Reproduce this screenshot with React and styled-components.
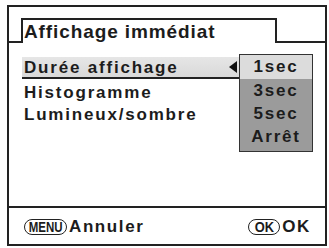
import React from "react"
import styled, { createGlobalStyle } from "styled-components"

const GlobalStyle = createGlobalStyle`
  html, body {
    margin: 0;
    padding: 0;
    background: #fff;
  }
  body {
    font-family: "Liberation Sans", Arial, sans-serif;
    color: #1c1c1c;
  }
`

const items = ["Durée affichage", "Histogramme", "Lumineux/sombre"]
const options = ["1sec", "3sec", "5sec", "Arrêt"]

const App = () => {
  return (
    <Screen>
      <GlobalStyle />
      <Frame>
        <Header>
          <Edge $w="12px" />
          <Tab>Affichage immédiat</Tab>
          <Edge />
        </Header>

        <Body>
          {items.map((label, i) => (
            <Row key={label} $active={i === 0}>
              {label}
              {i === 0 && <Arrow />}
            </Row>
          ))}

          <Dropdown>
            {options.map((opt, i) => (
              <Option key={opt} $selected={i === 0}>
                {opt}
              </Option>
            ))}
          </Dropdown>
        </Body>

        <Footer>
          <Action>
            <Pill $w="43px">
              <PillText $sx={0.82}>MENU</PillText>
            </Pill>
            Annuler
          </Action>
          <Action>
            <Pill $w="32px">
              <PillText $sx={0.92}>OK</PillText>
            </Pill>
            OK
          </Action>
        </Footer>
      </Frame>
    </Screen>
  )
}

const Screen = styled.div`
  width: 329px;
  height: 248px;
  box-sizing: border-box;
  padding: 5px 2px 2px 7px;
  background: #fff;
  overflow: hidden;
`

const Frame = styled.div`
  width: 320px;
  height: 241px;
  box-sizing: border-box;
  border: 2px solid #222;
  display: flex;
  flex-direction: column;
`

const Header = styled.div`
  display: flex;
  align-items: flex-end;
  height: 36px;
  padding-top: 11px;
  box-sizing: border-box;
`

const Edge = styled.div`
  width: ${(p) => p.$w || "auto"};
  flex: ${(p) => (p.$w ? "none" : "1")};
  height: 100%;
  border-bottom: 2px solid #222;
  box-sizing: border-box;
`

const Tab = styled.div`
  width: 256px;
  height: 100%;
  box-sizing: border-box;
  border: 2px solid #222;
  border-bottom: none;
  padding: 1px 0 0 1px;
  font-size: 19px;
  font-weight: bold;
  letter-spacing: 0.9px;
  line-height: 22px;
  white-space: nowrap;
`

const Body = styled.div`
  position: relative;
  flex: 1;
  padding: 14px 0 0 13px;
  display: flex;
  flex-direction: column;
`

const Row = styled.div`
  position: relative;
  width: ${(p) => (p.$active ? "217px" : "auto")};
  height: 22px;
  box-sizing: border-box;
  padding-left: 2px;
  margin-bottom: ${(p) => (p.$active ? "3px" : "0")};
  background: ${(p) =>
    p.$active ? "linear-gradient(#e6e6e6, #d9d9d9)" : "transparent"};
  border-bottom: ${(p) => (p.$active ? "2px solid #222" : "none")};
  font-size: 17px;
  font-weight: bold;
  letter-spacing: 1.8px;
  line-height: 21px;
  white-space: nowrap;
`

const Arrow = styled.span`
  position: absolute;
  right: 2px;
  top: 4px;
  width: 0;
  height: 0;
  border-top: 6px solid transparent;
  border-bottom: 6px solid transparent;
  border-right: 8px solid #111;
`

const Dropdown = styled.div`
  position: absolute;
  left: 230px;
  top: 11px;
  width: 74px;
  box-sizing: border-box;
  border: 1px solid #333;
  background: #9b9b9b;
  padding-bottom: 3px;
`

const Option = styled.div`
  height: ${(p) => (p.$selected ? "24px" : "23px")};
  background: ${(p) => (p.$selected ? "#dcdcdc" : "transparent")};
  text-align: center;
  font-size: 17px;
  font-weight: bold;
  letter-spacing: 1.8px;
  line-height: 23px;
  color: #1c1c1c;
`

const Footer = styled.div`
  height: 38px;
  box-sizing: border-box;
  border-top: 2px solid #222;
  display: flex;
  align-items: center;
  justify-content: space-between;
  padding: 1px 14px 0 15px;
`

const Action = styled.div`
  display: flex;
  align-items: center;
  gap: 2px;
  font-size: 17px;
  font-weight: bold;
  letter-spacing: 1.6px;
`

const Pill = styled.span`
  display: inline-flex;
  align-items: center;
  justify-content: center;
  width: ${(p) => p.$w};
  height: 16px;
  box-sizing: border-box;
  border: 1.5px solid #222;
  border-radius: 8px;
  overflow: hidden;
`

const PillText = styled.span`
  display: inline-block;
  font-size: 14px;
  font-weight: bold;
  letter-spacing: 0;
  line-height: 1;
  transform: scaleX(${(p) => p.$sx});
`

export default App
